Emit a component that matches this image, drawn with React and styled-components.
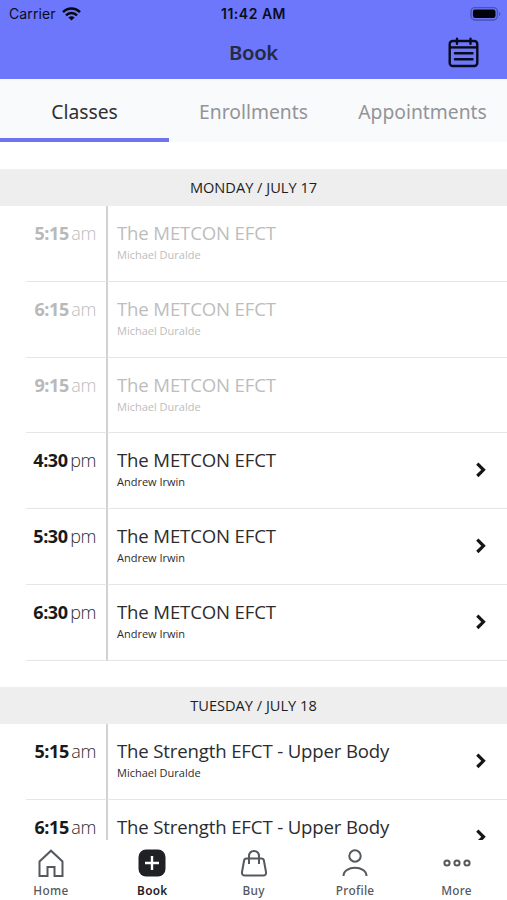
import styled, { createGlobalStyle } from "styled-components";

const GlobalStyle = createGlobalStyle`
  * {
    box-sizing: border-box;
  }
  body {
    margin: 0;
    background: #fff;
    font-family: "Noto Sans", "Open Sans", sans-serif;
    color: #2c2c2e;
  }
  h1, h2, h3, p, ul {
    margin: 0;
    padding: 0;
  }
  ul {
    list-style: none;
  }
  button {
    border: 0;
    padding: 0;
    background: none;
    font: inherit;
    color: inherit;
  }
`;

const Screen = styled.div`
  width: 507px;
  height: 900px;
  overflow: hidden;

  display: flex;
  flex-direction: column;
`;

const Header = styled.header`
  height: 79px;
  flex: none;
  background: #6c77fc;
`;

const StatusBar = styled.div`
  height: 26px;
  padding: 0 6px 0 9px;
  font-family: Inter, sans-serif;
  font-size: 14px;
  line-height: 26px;
  color: #0b0c1c;

  display: grid;
  grid-template-columns: 1fr auto 1fr;
  align-items: center;
`;

const Carrier = styled.div`
  display: flex;
  align-items: center;
  gap: 6px;
  letter-spacing: 0.1px;
`;

const Clock = styled.div`
  margin: 0 1px 0 -2px;
  padding-top: 1px;
  font-weight: 600;
  font-size: 14px;
  letter-spacing: 0.5px;
`;

const Battery = styled.svg`
  justify-self: end;
`;

const TitleBar = styled.div`
  height: 52px;
  padding: 0 28px;

  display: grid;
  grid-template-columns: 1fr auto 1fr;
  align-items: center;
`;

const Title = styled.h1`
  grid-column: 2;
  font-size: 20.3px;
  font-weight: 600;
  line-height: 28px;
  letter-spacing: -0.35px;
  color: #262a42;
`;

const CalendarButton = styled.button`
  justify-self: end;
  margin-right: 0.5px;
  display: flex;
`;

const Tabs = styled.nav`
  height: 63px;
  flex: none;
  background: #f9fafc;

  display: grid;
  grid-template-columns: repeat(3, 1fr);
`;

const Tab = styled.button`
  border-bottom: 4px solid ${({ $active }) => ($active ? "#6e73ee" : "transparent")};
  padding-top: 5px;
  font-size: 19.3px;
  color: ${({ $active }) => ($active ? "#303033" : "#939498")};
`;

const Schedule = styled.main`
  height: 698px;
  flex: none;
  overflow: hidden;
`;

const Day = styled.section`
  padding-top: ${({ $first }) => ($first ? "27.4px" : "26.5px")};
`;

const DayTitle = styled.h2`
  height: 37px;
  background: #eee;
  text-align: center;
  font-family: "Open Sans", sans-serif;
  font-size: 14.6px;
  font-weight: 400;
  line-height: 36px;
  color: #1d1d1f;
`;

const ClassRow = styled.li`
  height: 75.7px;
  margin-left: 26px;
  font-family: "Open Sans", sans-serif;
  color: ${({ $past }) => ($past ? "#bdbdbd" : "#2c2c2e")};

  display: grid;
  grid-template-columns: 82px 1fr 36px;
`;

const Time = styled.div`
  border-right: 2px solid #d2d2d3;
  border-bottom: 1px solid #e6e6e6;
  padding: 15px 10px 0 0;
  font-size: 18px;
  line-height: 24px;
  text-align: right;
  white-space: nowrap;

  b {
    font-weight: 700;
    letter-spacing: -0.4px;
    margin-right: 2.5px;
    color: ${({ $past }) => ($past ? "#b9b9b9" : "#19191a")};
  }
  span {
    font-weight: 300;
    letter-spacing: -0.4px;
  }
`;

const Info = styled.div`
  border-bottom: 1px solid #e6e6e6;
  padding: 15px 0 0 9px;
`;

const ClassName = styled.h3`
  font-size: 18.6px;
  font-weight: 400;
  line-height: 24px;
  letter-spacing: -0.15px;
  white-space: nowrap;
`;

const Teacher = styled.p`
  margin-top: 2px;
  font-size: 11px;
  line-height: 16px;
`;

const Arrow = styled.div`
  border-bottom: 1px solid #e6e6e6;
  padding: 28px 0 0 3px;
  color: #151515;
`;

const BottomNav = styled.nav`
  height: 60px;
  flex: none;
  background: #fff;

  display: grid;
  grid-template-columns: repeat(5, 1fr);
`;

const NavItem = styled.button`
  padding: 8px 0 0 0.5px;
  font-size: 11.8px;
  font-weight: ${({ $active }) => ($active ? 600 : 500)};
  line-height: 16px;
  letter-spacing: 0.3px;
  color: ${({ $active }) => ($active ? "#1f2124" : "#55585d")};

  display: flex;
  flex-direction: column;
  align-items: center;
  gap: 4px;
`;

const NavIcon = styled.svg`
  width: 30px;
  height: 30px;
  fill: none;
  stroke: currentColor;
  stroke-width: 2;
`;

const days = [
  {
    title: "MONDAY / JULY 17",
    classes: [
      { time: "5:15", period: "am", name: "The METCON EFCT", teacher: "Michael Duralde", past: true },
      { time: "6:15", period: "am", name: "The METCON EFCT", teacher: "Michael Duralde", past: true },
      { time: "9:15", period: "am", name: "The METCON EFCT", teacher: "Michael Duralde", past: true },
      { time: "4:30", period: "pm", name: "The METCON EFCT", teacher: "Andrew Irwin" },
      { time: "5:30", period: "pm", name: "The METCON EFCT", teacher: "Andrew Irwin" },
      { time: "6:30", period: "pm", name: "The METCON EFCT", teacher: "Andrew Irwin" },
    ],
  },
  {
    title: "TUESDAY / JULY 18",
    classes: [
      { time: "5:15", period: "am", name: "The Strength EFCT - Upper Body", teacher: "Michael Duralde" },
      { time: "6:15", period: "am", name: "The Strength EFCT - Upper Body" },
    ],
  },
];

function WifiIcon() {
  return (
    <svg width="19" height="14" viewBox="0 0 19 14" fill="none" stroke="#05060f" strokeWidth="2.5">
      <path d="M1 5.1C5.8.4 13.2.4 18 5.1" />
      <path d="M4 8.3c3.2-3 7.8-3 11 0" />
      <path d="M9.5 13.6 6.4 10.5c1.8-1.6 4.4-1.6 6.2 0Z" fill="#05060f" stroke="none" />
    </svg>
  );
}

function CalendarIcon() {
  return (
    <svg width="32" height="32" viewBox="0 0 32 32" fill="none" stroke="#080a1c" strokeWidth="2.4">
      <rect x="2.7" y="5" width="27.6" height="25" rx="3" />
      <path d="M2.7 11.4h27.6" />
      <path d="M10 2.8v5M23.500 2.8v5M8 17.300h17.500M8 23.300h17.500" strokeLinecap="round" />
    </svg>
  );
}

function ArrowIcon() {
  return (
    <svg width="14" height="18" viewBox="0 0 14 18" fill="none" stroke="currentColor" strokeWidth="3.2">
      <path d="m3.300 2.600 6.200 6.200-6.200 6.200" />
    </svg>
  );
}

export default function App() {
  return (
    <Screen>
      <GlobalStyle />
      <Header>
        <StatusBar>
          <Carrier>
            Carrier <WifiIcon />
          </Carrier>
          <Clock>11:42 AM</Clock>
          <Battery width="31" height="14" viewBox="0 0 31 14">
            <rect x="1" y=".6" width="26.400" height="12.400" rx="4" fill="none" stroke="#4c53ad" strokeWidth="1.400" />
            <rect x="2.900" y="2.500" width="22.600" height="8.600" rx="2.300" fill="#02020a" />
            <path d="M29 5c1.800.7 1.800 3.300 0 4Z" fill="#4c53ad" />
          </Battery>
        </StatusBar>
        <TitleBar>
          <Title>Book</Title>
          <CalendarButton>
            <CalendarIcon />
          </CalendarButton>
        </TitleBar>
      </Header>

      <Tabs>
        <Tab $active>Classes</Tab>
        <Tab>Enrollments</Tab>
        <Tab>Appointments</Tab>
      </Tabs>

      <Schedule>
        {days.map((day, i) => (
          <Day key={day.title} $first={i === 0}>
            <DayTitle>{day.title}</DayTitle>
            <ul>
              {day.classes.map((item) => (
                <ClassRow key={item.time} $past={item.past}>
                  <Time $past={item.past}>
                    <b>{item.time}</b>
                    <span>{item.period}</span>
                  </Time>
                  <Info>
                    <ClassName>{item.name}</ClassName>
                    {item.teacher && <Teacher>{item.teacher}</Teacher>}
                  </Info>
                  <Arrow>{!item.past && <ArrowIcon />}</Arrow>
                </ClassRow>
              ))}
            </ul>
          </Day>
        ))}
      </Schedule>

      <BottomNav>
        <NavItem>
          <NavIcon viewBox="0 0 30 30">
            <path d="M3.500 28V13.500L15 2.700l11.500 10.800V28h-8v-9h-7v9Z" />
          </NavIcon>
          Home
        </NavItem>
        <NavItem $active>
          <NavIcon viewBox="0 0 30 30">
            <rect x="1.500" y="1.500" width="27" height="27" rx="7.500" fill="currentColor" stroke="none" />
            <path d="M15 8v14M8 15h14" stroke="#fff" strokeWidth="2.400" />
          </NavIcon>
          Book
        </NavItem>
        <NavItem>
          <NavIcon viewBox="0 0 30 30">
            <path d="M7.500 10.500h15q2 0 2.400 2l2.100 11.500q.5 3.500-3 3.500H6q-3.500 0-3-3.500l2.100-11.500q.4-2 2.400-2Z" />
            <path d="M10 16V8.500Q10 3 15 3t5 5.500V16" />
          </NavIcon>
          Buy
        </NavItem>
        <NavItem>
          <NavIcon viewBox="0 0 30 30">
            <circle cx="15" cy="8" r="5.700" />
            <path d="M3.500 28c0-11 23-11 23 0" />
          </NavIcon>
          Profile
        </NavItem>
        <NavItem>
          <NavIcon viewBox="0 0 30 30">
            <circle cx="5" cy="15" r="2.600" />
            <circle cx="15" cy="15" r="2.600" />
            <circle cx="25" cy="15" r="2.600" />
          </NavIcon>
          More
        </NavItem>
      </BottomNav>
    </Screen>
  );
}
